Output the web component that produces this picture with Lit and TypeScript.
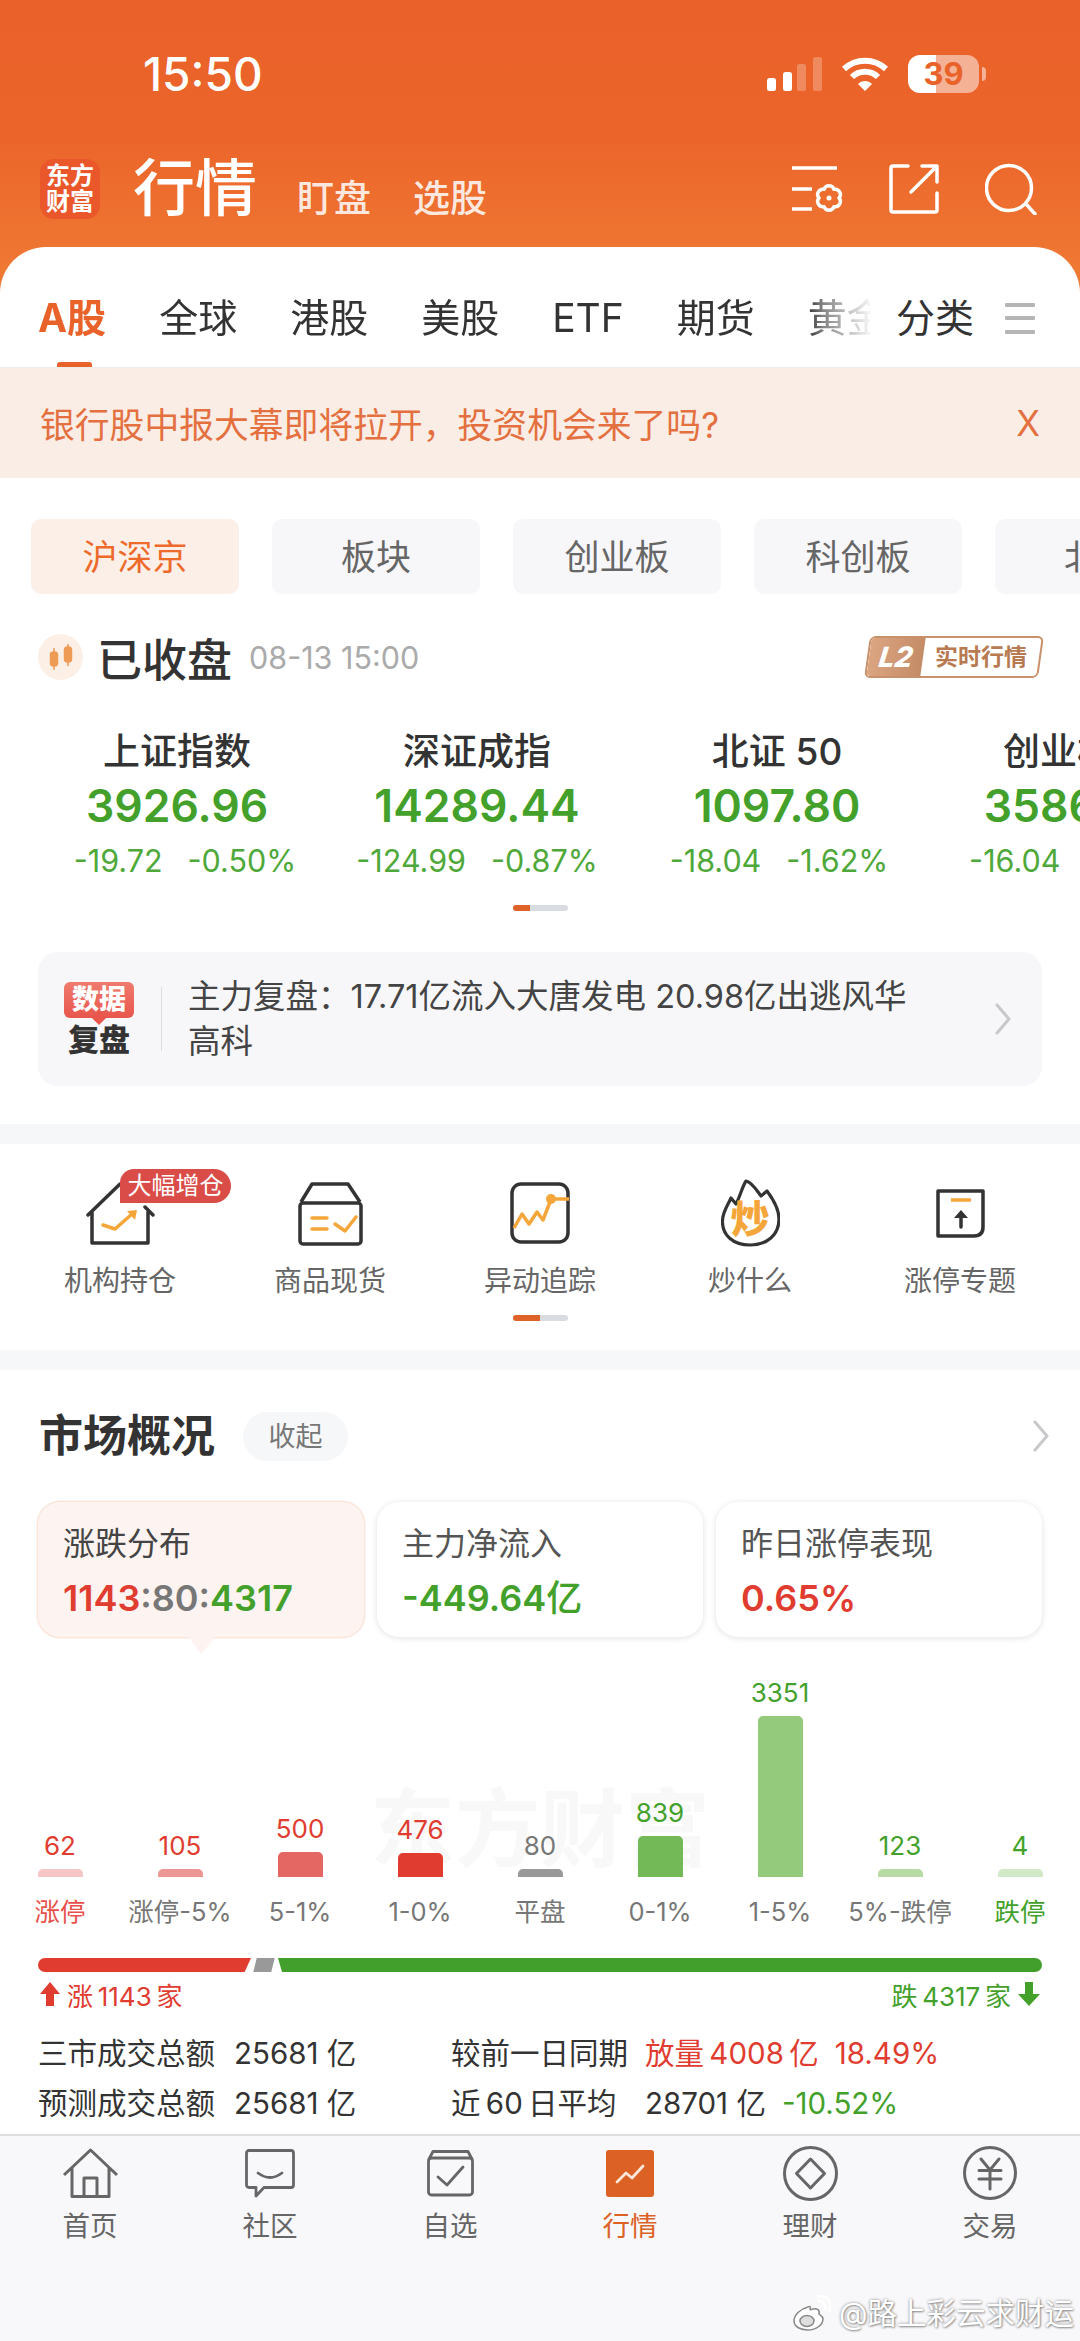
import { LitElement, html, css } from "lit";
import { customElement } from "lit/decorators.js";

const tabs = ["全球", "港股", "美股", "ETF", "期货", "黄金"];
const chips = ["沪深京", "板块", "创业板", "科创板", "北证"];
const indices = [
  { n: "上证指数", v: "3926.96", a: "-19.72", b: "-0.50%" },
  { n: "深证成指", v: "14289.44", a: "-124.99", b: "-0.87%" },
  { n: "北证 50", v: "1097.80", a: "-18.04", b: "-1.62%" },
  { n: "创业板指", v: "3586.21", a: "-16.04", b: "-0.45%" },
];
const bars = [
  { v: "62", h: 8, c: "#F6C6C6", t: "red", l: "涨停", lc: "red" },
  { v: "105", h: 8, c: "#EC9794", t: "red", l: "涨停-5%", lc: "" },
  { v: "500", h: 25, c: "#E56764", t: "red", l: "5-1%", lc: "" },
  { v: "476", h: 24, c: "#E03C30", t: "red", l: "1-0%", lc: "" },
  { v: "80", h: 8, c: "#999999", t: "gray", l: "平盘", lc: "" },
  { v: "839", h: 41, c: "#74B957", t: "green", l: "0-1%", lc: "" },
  { v: "3351", h: 161, c: "#93CA7C", t: "green", l: "1-5%", lc: "" },
  { v: "123", h: 8, c: "#B8DBA6", t: "green", l: "5%-跌停", lc: "" },
  { v: "4", h: 8, c: "#D2E9C8", t: "green", l: "跌停", lc: "green" },
];

const houseIcon = html`<svg width="69" height="63" viewBox="0 0 69 63" fill="none" stroke="#333" stroke-width="3.5" stroke-linecap="round" stroke-linejoin="round">
  <path d="M2 33 L34 2 M59 25 L67 33 M6 30 V61 H62 V30" />
  <path d="M17 43 L29 47 L46 32" stroke="#F4A63A" />
  <path d="M41 29 L51 28 L49 38 Z" fill="#F4A63A" stroke="none" />
</svg>`;
const boxIcon = html`<svg width="65" height="65" viewBox="0 0 65 65" fill="none" stroke="#333" stroke-width="3.5" stroke-linejoin="round">
  <rect x="2" y="22" width="61" height="41" rx="3" />
  <path d="M3 21 L14 3 H50 L62 21" />
  <path d="M14 37 H29 M14 48 H29 M37 43 L47 50 L58 36" stroke="#F4A63A" stroke-linecap="round" />
</svg>`;
const trackIcon = html`<svg width="60" height="62" viewBox="0 0 60 62" fill="none" stroke="#333" stroke-width="3.5">
  <rect x="2" y="2" width="56" height="58" rx="9" />
  <path d="M4 46 L12 32 L19 42 L27 30 L33 38 L40 20 M42 17 H59" stroke="#F4A63A" stroke-linejoin="round" />
  <circle cx="41" cy="17" r="5" fill="#F4A63A" stroke="none" />
</svg>`;
const flameIcon = html`<svg width="59" height="68" viewBox="0 0 59 68" fill="none">
  <path d="M29 66 C12 66 1 56 1.500 42 C1.500 33 7 26 10 19 L15 25 C19 18 21 8 25 2 C31 3 36 12 40 17 L46 12 C52 20 58 29 58 40 C58 56 46 66 29 66 Z" stroke="#333" stroke-width="3.2" stroke-linejoin="round" />
  <text x="29" y="54" text-anchor="middle" font-size="39" font-weight="900" fill="#F4A63A">炒</text>
</svg>`;
const limitIcon = html`<svg width="49" height="49" viewBox="0 0 49 49" fill="none" stroke="#333" stroke-width="3.5" stroke-linejoin="round">
  <path d="M2 2 H47 V38 Q47 47 38 47 H2 Z" />
  <path d="M15 11 H35" stroke="#F4A63A" />
  <path d="M25 26 V38" stroke-linecap="round" />
  <path d="M18 29 L25 21 L32 29 Z" fill="#333" stroke="none" />
</svg>`;
const grid = [
  { i: houseIcon, l: "机构持仓" },
  { i: boxIcon, l: "商品现货" },
  { i: trackIcon, l: "异动追踪" },
  { i: flameIcon, l: "炒什么" },
  { i: limitIcon, l: "涨停专题" },
];
const chevron = html`<svg width="18" height="32" viewBox="0 0 18 32" fill="none" stroke="#C8C8CC" stroke-width="3" stroke-linecap="round" stroke-linejoin="round"><path d="M3 2 L15 16 L3 30" /></svg>`;

const nav = [
  { l: "首页", i: html`<svg width="57" height="50" viewBox="0 0 57 50" fill="none" stroke="#666" stroke-width="3" stroke-linejoin="round"><path d="M2 27 L28.500 2 L55 27 M10 20 V48.500 H47 V20 M22 48.500 V30 H35 V48.500" /></svg>` },
  { l: "社区", i: html`<svg width="50" height="49" viewBox="0 0 50 49" fill="none" stroke="#666" stroke-width="2.800" stroke-linejoin="round"><path d="M4 1.500 H46 A2.500 2.500 0 0 1 48.500 4 V36 A2.500 2.500 0 0 1 46 38.500 H19 L11 47 V38.500 H4 A2.500 2.500 0 0 1 1.500 36 V4 A2.500 2.500 0 0 1 4 1.500 Z" /><path d="M13 24 Q25 33 37 24" stroke-linecap="round" /></svg>` },
  { l: "自选", i: html`<svg width="47" height="47" viewBox="0 0 47 47" fill="none" stroke="#666" stroke-width="2.800" stroke-linejoin="round"><path d="M1.500 10 L6 1.500 H41 L45.500 10" /><rect x="1.500" y="8" width="44" height="37" rx="3" /><path d="M11 27 L20 35 L36 17" stroke-linecap="round" /></svg>` },
  { l: "行情", on: true, i: html`<svg width="48" height="47" viewBox="0 0 48 47" fill="none"><rect width="48" height="47" rx="3" fill="#DC6125" /><path d="M11 32 L20 23 L26 28 L37 16" stroke="#FBE6DA" stroke-width="2.800" stroke-linecap="round" stroke-linejoin="round" /></svg>` },
  { l: "理财", i: html`<svg width="55" height="55" viewBox="0 0 55 55" fill="none" stroke="#666" stroke-width="3" stroke-linejoin="round"><circle cx="27.500" cy="27.500" r="26" /><path d="M27.500 13 L41.500 27.500 L27.500 42 L13.500 27.500 Z" /></svg>` },
  { l: "交易", i: html`<svg width="54" height="54" viewBox="0 0 54 54" fill="none" stroke="#666" stroke-width="3" stroke-linecap="round"><circle cx="27" cy="27" r="25.500" /><path d="M18 13 L27 24 L36 13 M16 24.500 H38 M16 33 H38 M27 24 V43" /></svg>` },
];

@customElement("app-root")
export class AppRoot extends LitElement {
  static styles = css`
    :host {
      display: block;
      width: 1080px;
      height: 2341px;
      overflow: hidden;
      position: relative;
      font-family: Inter, "Noto Sans CJK SC", sans-serif;
      color: #333;
    }
    svg { display: block; flex: none; }
    .page {
      display: flex;
      flex-direction: column;
      height: 2341px;
      background: linear-gradient(#ea6229 0, #eb642a 130px, #ef7833 270px) no-repeat;
      background-size: 100% 300px;
    }
    .status {
      display: flex;
      align-items: center;
      height: 54px;
      margin-top: 47px;
      padding-left: 143px;
      color: #fff;
    }
    .time { font-size: 46px; font-weight: 500; line-height: 54px; flex: 1; }
    .signal { margin-right: 19px; }
    .wifi { margin-right: 19px; }
    .batt {
      width: 71px;
      height: 38px;
      border-radius: 12px;
      background: linear-gradient(90deg, #fff 39.500%, rgba(255,255,255,.5) 39.500%);
      color: #e9622a;
      font-size: 31px;
      font-weight: 700;
      line-height: 38px;
      text-align: center;
    }
    .tip { width: 4px; height: 14px; margin: 0 94px 0 3px; background: rgba(255,255,255,.5); border-radius: 0 4px 4px 0; }
    .head { display: flex; align-items: flex-end; height: 60px; margin-top: 58px; padding-left: 40px; color: #fff; }
    .logo {
      width: 60px; height: 60px; border-radius: 14px; background: #e9572a;
      display: flex; align-items: center; justify-content: center; text-align: center;
      font-size: 24px; line-height: 26px; font-weight: 700; margin-right: 33px;
    }
    .h1 { font-size: 62px; line-height: 60px; font-weight: 500; margin-right: 40px; }
    .sub { font-size: 37px; line-height: 40px; margin-right: 42px; color: rgba(255,255,255,.85); font-weight: 500; }
    .head-ico { margin-left: auto; display: flex; align-items: center; gap: 46px; padding-right: 43px; align-self: center; }
    .sheet { flex: 1; min-height: 0; overflow: hidden; margin-top: 28px; background: #fff; border-radius: 46px 46px 0 0; }
    .tabs { display: flex; align-items: center; height: 121px; padding: 22px 0 0 38px; box-sizing: border-box; border-bottom: 1px solid #ececec; font-size: 39px; line-height: 48px; color: #333; position: relative; }
    .tab-scroll { display: flex; gap: 53px; width: 832px; overflow: hidden; mask-image: linear-gradient(90deg, #000 770px, rgba(0,0,0,.6) 785px, rgba(0,0,0,.05) 832px); white-space: nowrap; flex: none; }
    .tab-a { color: #e9622a; font-weight: 700; }
    .uline { position: absolute; left: 57px; top: 115px; width: 35px; height: 5px; background: #e9622a; border-radius: 3px 3px 0 0; }
    .cat { margin-left: 26px; }
    .tabs svg { margin-left: 31px; }
    .notice { display: flex; align-items: center; justify-content: space-between; height: 110px; padding: 0 40px; background: #faede6; color: #e5703f; font-size: 34.800px; }
    .chips { display: flex; gap: 33px; margin: 41px 0 0 31px; overflow: hidden; }
    .chip { flex: none; width: 208px; height: 75px; border-radius: 10px; background: #f7f7f9; color: #666; font-size: 35px; line-height: 77px; text-align: center; }
    .chip.on { background: #fcefe8; color: #ee6a2a; }
    .state { display: flex; align-items: center; height: 46px; margin-top: 40px; padding: 0 38px; }
    .dot { width: 45px; height: 46px; border-radius: 50%; background: #fcefe6; display: flex; align-items: center; justify-content: center; }
    .state b { font-size: 45px; font-weight: 500; margin: 0 17px 0 14px; color: #333; }
    .state span { font-size: 30.500px; color: #aaa; }
    .l2 { margin-left: auto; margin-right: 1px; display: flex; width: 170px; height: 38px; border: 2px solid #c9916b; border-radius: 6px; overflow: hidden; transform: skewX(-8deg); }
    .l2a { width: 54px; background: linear-gradient(90deg, #dca582, #c48c66); color: #fff; font-size: 28px; font-weight: 800; font-style: italic; line-height: 38px; text-align: center; }
    .l2b { flex: 1; color: #b87a50; font-size: 23px; font-weight: 700; line-height: 38px; text-align: center; transform: skewX(8deg); white-space: nowrap; }
    .idx { display: flex; margin-top: 52px; margin-left: 27px; overflow: hidden; }
    .ix { flex: none; width: 300px; text-align: center; white-space: nowrap; }
    .ix .n { font-size: 37px; line-height: 40px; font-weight: 500; color: #333; }
    .ix .v { font-size: 44.500px; line-height: 48px; margin-top: 10px; font-weight: 600; color: #43a12b; }
    .ix .c { display: flex; justify-content: center; gap: 25px; font-size: 30.500px; line-height: 36px; margin-top: 13px; color: #4fa83a; }
    .ix:first-child .c { padding-left: 16px; }
    .ix:nth-child(3) .c { padding-left: 4px; }
    .ix:nth-child(4) .v { padding-right: 14px; }
    .ix:nth-child(4) .c { padding-left: 10px; }
    .ind { display: flex; width: 55px; height: 6px; margin: 0 auto; border-radius: 3px; background: #d8dbe0; overflow: hidden; }
    .ind i { display: block; background: #df6228; }
    .ind.a { margin-top: 26px; }
    .ind.a i { width: 17px; }
    .ind.b { margin-top: 16px; }
    .ind.b i { width: 27px; }
    .info { display: flex; align-items: center; height: 134px; margin: 41px 38px 0; border-radius: 20px; background: #f7f7f9; }
    .badge { width: 70px; margin-left: 26px; text-align: center; flex: none; }
    .badge .t { background: linear-gradient(#f07a6e, #e8564c); color: #fff; font-size: 27px; line-height: 36px; font-weight: 800; border-radius: 6px; position: relative; }
    .badge .t::after { content: ""; position: absolute; left: 30px; bottom: -5px; width: 10px; height: 10px; background: #e8564c; transform: rotate(45deg); }
    .badge .d { font-size: 31px; line-height: 32px; margin-top: 6px; font-weight: 900; color: #333; }
    .vline { width: 1px; height: 64px; background: #ddd; margin: 0 26px 0 27px; flex: none; }
    .info p { flex: none; margin: 0; font-size: 32.500px; line-height: 45px; color: #444; width: 745px; }
    .info svg { margin-left: auto; margin-right: 30px; }
    .band { height: 20px; background: #f6f7f9; }
    .band.first { margin-top: 38px; }
    .grid { display: grid; grid-template-columns: repeat(5, 210px); padding: 34px 15px 0; }
    .gi { display: flex; flex-direction: column; align-items: center; position: relative; }
    .gi .ic { height: 70px; display: flex; align-items: center; justify-content: center; }
    .gi .lb { margin-top: 15px; font-size: 28px; line-height: 36px; color: #666; white-space: nowrap; }
    .tagx { position: absolute; left: 105px; top: -9px; width: 111px; height: 34px; background: #d94c48; border-radius: 14px 17px 17px 0; color: #fff; font-size: 24px; line-height: 34px; text-align: center; white-space: nowrap; }
    .gsec { height: 206px; box-sizing: border-box; }
    .mk { display: flex; align-items: center; height: 50px; margin-top: 41px; padding: 0 30px 0 39px; }
    .mk h2 { margin: 0; font-size: 44px; line-height: 50px; font-weight: 700; color: #333; }
    .pill { margin-left: 28px; width: 105px; height: 49px; border-radius: 25px; background: #f6f7f9; font-size: 27px; line-height: 49px; text-align: center; color: #777; }
    .mk svg { margin-left: auto; }
    .cards { display: flex; gap: 13px; padding: 0 38px; margin-top: 41px; }
    .cardx { flex: 1; height: 135px; box-sizing: border-box; border-radius: 22px; padding: 22px 0 0 25px; background: #fff; box-shadow: 0 1px 6px rgba(0,0,0,.12); position: relative; }
    .cardx.on { background: #fdf3f0; box-shadow: 0 0 0 1.500px #fbe6dc; }
    .cardx.on::after { content: ""; position: absolute; left: 153px; bottom: -11px; width: 21px; height: 21px; background: #fdf3f0; transform: rotate(45deg) skew(8deg, 8deg); }
    .cardx .lab { font-size: 32px; line-height: 40px; color: #555; }
    .cardx.on .lab { color: #444; }
    .cardx .val { font-size: 36px; line-height: 42px; margin-top: 13px; font-weight: 600; }
    .cardx .val small { font-size: 36px; font-weight: 500; }
    .red { color: #e03c30; }
    .green { color: #43a12b; }
    .gray { color: #777; }
    .chart { display: grid; grid-template-columns: repeat(9, 120px); height: 240px; position: relative; align-items: end; }
    .mark { position: absolute; left: 370px; top: 148px; font-size: 85px; line-height: 90px; color: #f8f8f8; font-weight: 700; white-space: nowrap; }
    .col { display: flex; flex-direction: column; align-items: center; position: relative; }
    .col .num { font-size: 26px; line-height: 30px; margin-bottom: 8px; }
    .col .bar { width: 45px; border-radius: 5px 5px 0 0; }
    .xl { display: grid; grid-template-columns: repeat(9, 120px); margin-top: 18px; font-size: 25.500px; line-height: 34px; text-align: center; color: #777; white-space: nowrap; }
    .xl .red { color: #e8504a; }
    .prog { display: flex; height: 14px; margin: 29px 38px 0; border-radius: 7px; overflow: hidden; }
    .prog .r { width: 213px; background: #e03c30; clip-path: polygon(0 0, 100% 0, 97% 100%, 0 100%); }
    .prog .g { width: 18px; margin-left: 4px; background: #999; transform: skewX(-14deg); }
    .prog .w { flex: 1; margin-left: 5px; background: #439f2b; clip-path: polygon(0 0, 100% 0, 100% 100%, 4px 100%); }
    .ud { display: flex; align-items: center; height: 32px; margin-top: 6px; padding: 0 40px; font-size: 26px; }
    .ud span { display: flex; align-items: center; gap: 7px; }
    .ud .end { margin-left: auto; }
    .stats { display: grid; grid-template-columns: 196px 217px 194px 1fr; padding-left: 38px; margin-top: 18px; font-size: 29.500px; line-height: 50px; color: #333; white-space: nowrap; }
    .stats .p { display: flex; gap: 16px; }
    .nav { flex: none; height: 207px; box-sizing: border-box; border-top: 2px solid #ddd; background: #f8f8fa; display: grid; grid-template-columns: repeat(6, 180px); padding-top: 10px; }
    .ni { display: flex; flex-direction: column; align-items: center; }
    .ni .ic { height: 54px; display: flex; align-items: center; justify-content: center; }
    .ni .lb { margin-top: 9px; font-size: 27.500px; line-height: 34px; color: #666; }
    .ni.on .lb { color: #dc6125; }
    .wm { position: absolute; right: 6px; bottom: 6px; display: flex; align-items: center; gap: 8px; color: #fff; font-size: 29.500px; line-height: 44px; text-shadow: 0 0 3px rgba(0,0,0,.45), 1px 1px 2px rgba(0,0,0,.3); white-space: nowrap; }
  `;

  render() {
    return html`<div class="page">
      <div class="status">
        <div class="time">15:50</div>
        <svg class="signal" width="55" height="34" viewBox="0 0 55 34" fill="#fff">
          <rect x="0" y="21" width="9" height="13" rx="2.500" />
          <rect x="16" y="15" width="9" height="19" rx="2.500" />
          <rect x="30" y="7" width="9" height="27" rx="2.500" opacity=".25" />
          <rect x="46" y="0" width="9" height="34" rx="2.500" opacity=".25" />
        </svg>
        <svg class="wifi" width="48" height="35" viewBox="0 0 48 35" fill="none" stroke="#fff" stroke-width="6">
          <path d="M3 12 C15 1 33 1 45 12" />
          <path d="M11 20 C18 13 30 13 37 20" />
          <path d="M17 27 L24 34 L31 27 C27 23 21 23 17 27 Z" fill="#fff" stroke="none" />
        </svg>
        <div class="batt">39</div>
        <div class="tip"></div>
      </div>
      <div class="head">
        <div class="logo">东方<br />财富</div>
        <div class="h1">行情</div>
        <div class="sub">盯盘</div>
        <div class="sub">选股</div>
        <div class="head-ico">
          <svg width="51" height="46" viewBox="0 0 51 46" fill="none" stroke="#fff" stroke-width="3.500" stroke-linejoin="round">
            <path d="M0 2 H45 M0 23 H20 M0 43 H20" />
            <path d="M47 32 A5.300 5.300 0 0 1 42 40.700 A5.300 5.300 0 0 1 32 40.700 A5.300 5.300 0 0 1 27 32 A5.300 5.300 0 0 1 32 23.300 A5.300 5.300 0 0 1 42 23.300 A5.300 5.300 0 0 1 47 32 Z" />
            <circle cx="37" cy="32" r="2.500" fill="#fff" stroke="none" />
          </svg>
          <svg width="50" height="50" viewBox="0 0 50 50" fill="none" stroke="#fff" stroke-width="3.500" stroke-linecap="round" stroke-linejoin="round">
            <path d="M19 2 H4 A2 2 0 0 0 2 4 V46 A2 2 0 0 0 4 48 H46 A2 2 0 0 0 48 46 V29" />
            <path d="M22 28 L47 3 M33 2 H48 V18" />
          </svg>
          <svg width="52" height="52" viewBox="0 0 52 52" fill="none" stroke="#fff" stroke-width="3.500" stroke-linecap="round">
            <circle cx="24" cy="25" r="22.500" />
            <path d="M41 41 L50 51" />
          </svg>
        </div>
      </div>
      <div class="sheet">
        <div class="tabs">
          <div class="tab-scroll">
            <span class="tab-a">A股</span>
            ${tabs.map((t) => html`<span>${t}</span>`)}
          </div>
          <span class="cat">分类</span>
          <svg width="30" height="31" viewBox="0 0 30 31" fill="#b5b5b5"><rect y="0" width="30" height="4" rx="1" /><rect y="13" width="30" height="4" rx="1" /><rect y="27" width="30" height="4" rx="1" /></svg>
          <div class="uline"></div>
        </div>
        <div class="notice"><span>银行股中报大幕即将拉开，投资机会来了吗?</span><span>X</span></div>
        <div class="chips">
          ${chips.map((c, i) => html`<div class="chip ${i === 0 ? "on" : ""}">${c}</div>`)}
        </div>
        <div class="state">
          <div class="dot">
            <svg width="26" height="30" viewBox="0 0 26 30" fill="#ee9b55" stroke="#ee9b55" stroke-width="1.500">
              <path d="M6 6 V28" /><rect x="2.500" y="10" width="7" height="14" rx="3" />
              <path d="M20 2 V24" /><rect x="16.500" y="5" width="7" height="15" rx="3" />
            </svg>
          </div>
          <b>已收盘</b><span>08-13 15:00</span>
          <div class="l2"><div class="l2a">L2</div><div class="l2b">实时行情</div></div>
        </div>
        <div class="idx">
          ${indices.map((x) => html`<div class="ix">
            <div class="n">${x.n}</div>
            <div class="v">${x.v}</div>
            <div class="c"><span>${x.a}</span><span>${x.b}</span></div>
          </div>`)}
        </div>
        <div class="ind a"><i></i></div>
        <div class="info">
          <div class="badge"><div class="t">数据</div><div class="d">复盘</div></div>
          <div class="vline"></div>
          <p>主力复盘：17.71亿流入大唐发电 20.98亿出逃风华高科</p>
          ${chevron}
        </div>
        <div class="band first"></div>
        <div class="gsec">
          <div class="grid">
            ${grid.map((g, i) => html`<div class="gi">
              <div class="ic">${g.i}</div>
              <div class="lb">${g.l}</div>
              ${i === 0 ? html`<div class="tagx">大幅增仓</div>` : ""}
            </div>`)}
          </div>
          <div class="ind b"><i></i></div>
        </div>
        <div class="band"></div>
        <div class="mk">
          <h2>市场概况</h2>
          <div class="pill">收起</div>
          ${chevron}
        </div>
        <div class="cards">
          <div class="cardx on">
            <div class="lab">涨跌分布</div>
            <div class="val"><span class="red">1143</span><span class="gray">:80:</span><span class="green">4317</span></div>
          </div>
          <div class="cardx">
            <div class="lab">主力净流入</div>
            <div class="val green">-449.64<small>亿</small></div>
          </div>
          <div class="cardx">
            <div class="lab">昨日涨停表现</div>
            <div class="val red">0.65%</div>
          </div>
        </div>
        <div class="chart">
          <div class="mark">东方财富</div>
          ${bars.map((b) => html`<div class="col">
            <div class="num ${b.t}">${b.v}</div>
            <div class="bar" style="height:${b.h}px;background:${b.c}"></div>
          </div>`)}
        </div>
        <div class="xl">
          ${bars.map((b) => html`<div class="${b.lc}">${b.l}</div>`)}
        </div>
        <div class="prog"><div class="r"></div><div class="g"></div><div class="w"></div></div>
        <div class="ud">
          <span class="red">
            <svg width="20" height="24" viewBox="0 0 20 24" fill="#e03c30"><path d="M10 0 L20 12 H14 V24 H6 V12 H0 Z" /></svg>
            涨\u20091143\u2009家
          </span>
          <span class="green end">
            跌\u20094317\u2009家
            <svg width="22" height="24" viewBox="0 0 22 24" fill="#43a12b"><path d="M11 24 L22 12 H15 V0 H7 V12 H0 Z" /></svg>
          </span>
        </div>
        <div class="stats">
          <div>三市成交总额</div><div>25681 亿</div><div>较前一日同期</div>
          <div class="p"><span class="red">放量\u20094008\u2009亿</span><span class="red">18.49%</span></div>
          <div>预测成交总额</div><div>25681 亿</div><div>近\u200960\u2009日平均</div>
          <div class="p"><span>28701 亿</span><span class="green">-10.52%</span></div>
        </div>
      </div>
      <div class="nav">
        ${nav.map((n) => html`<div class="ni ${n.on ? "on" : ""}">
          <div class="ic">${n.i}</div>
          <div class="lb">${n.l}</div>
        </div>`)}
      </div>
    </div>
    <div class="wm">
      <svg width="38" height="36" viewBox="0 0 38 36" fill="none" stroke="#888" stroke-width="1.500">
        <path d="M15 12 C7 14 1 20 1 26 C1 32 8 35 15 35 C23 35 30 30 30 24 C30 21 27 20 26 19 C27 15 24 13 20 14 C18 15 17 15 17 14 C18 11 17 11 15 12 Z" fill="#fff" />
        <ellipse cx="14" cy="26" rx="7" ry="5.500" fill="#ddd" />
        <path d="M24 6 C30 5 34 10 32 16 M24 1 C33 -1 40 7 36 17" stroke="#fff" stroke-width="3" />
      </svg>
      <span>@路上彩云求财运</span>
    </div>`;
  }
}
